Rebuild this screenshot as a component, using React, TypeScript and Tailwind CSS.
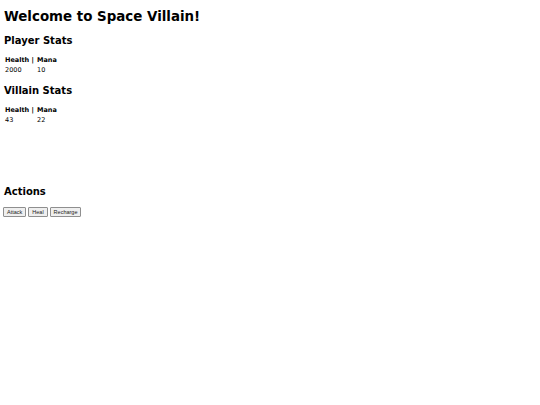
function Stats({ health, mana }: { health: string; mana: string }) {
  return (
    <table className="mt-[8px] border-collapse">
      <thead>
        <tr>
          <th className="text-left font-bold text-[6.5px] leading-[9px] p-0 pl-[1px] w-[33px]">Health |</th>
          <th className="text-left font-bold text-[6.5px] leading-[9px] p-0">Mana</th>
        </tr>
      </thead>
      <tbody>
        <tr>
          <td className="text-[6.5px] leading-[10px] p-0 pl-[1px]">{health}</td>
          <td className="text-[6.5px] leading-[10px] p-0">{mana}</td>
        </tr>
      </tbody>
    </table>
  );
}

export default function App() {
  return (
    <div className="px-1 pt-[8px] text-[8px] text-black bg-white min-h-[405px]" style={{ fontFamily: '"DejaVu Sans", Verdana, sans-serif' }}>
      <h1 className="text-[13.4px] font-bold leading-[18px]">Welcome to Space Villain!</h1>
      <h2 className="mt-[8px] text-[10px] font-bold leading-[14px]">Player Stats</h2>
      <Stats health="2000" mana="10" />
      <h2 className="mt-[9px] text-[10px] font-bold leading-[14px]">Villain Stats</h2>
      <Stats health="43" mana="22" />
      <div className="h-[60px]" />
      <h2 className="text-[10px] font-bold leading-[14px]">Actions</h2>
      <div className="mt-[8px] -ml-[1px] flex gap-[2px]">
        {["Attack", "Heal", "Recharge"].map((b) => (
          <button key={b} className="text-[5.5px] leading-[7px] px-[3px] py-[0.5px] bg-[#efefef] text-[#222] border border-[#8f8f8f] rounded-[1px]" style={{ fontFamily: '"Liberation Sans", Arial, sans-serif' }}>{b}</button>
        ))}
      </div>
    </div>
  );
}
